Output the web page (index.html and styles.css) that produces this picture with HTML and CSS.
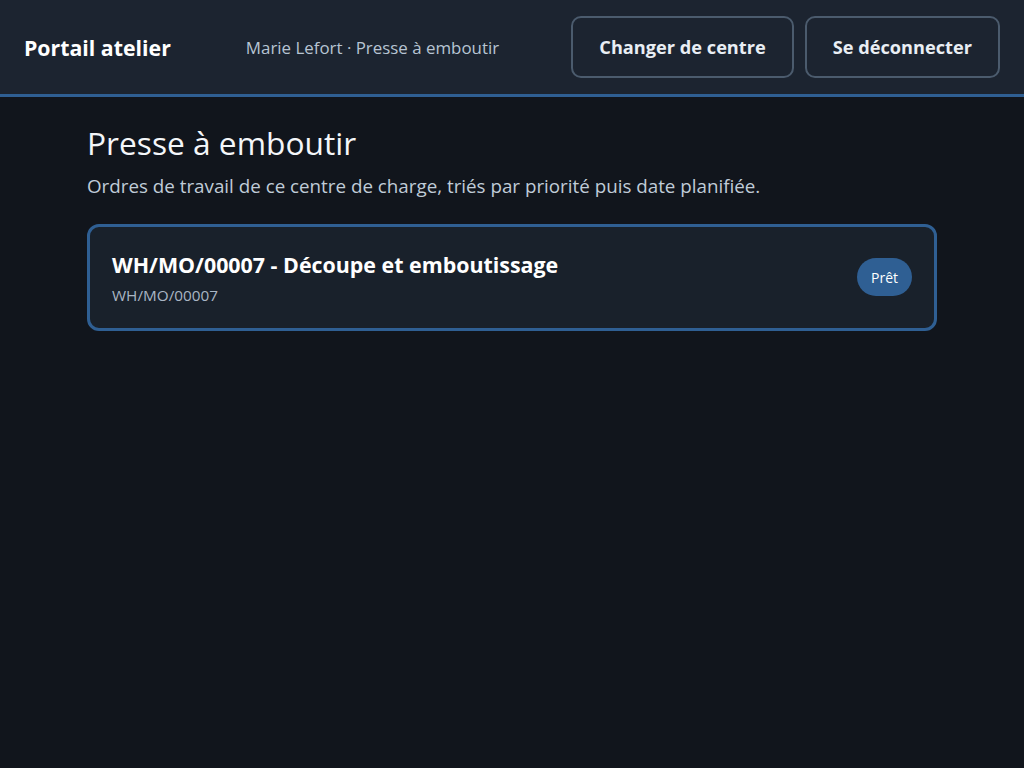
FILE: index.html
```html
<!DOCTYPE html>
<html lang="fr">
<head>
<meta charset="utf-8">
<title>Portail atelier</title>
<link rel="stylesheet" href="styles.css">
</head>
<body>
<header class="topbar">
  <div class="brand">Portail atelier</div>
  <div class="context">Marie Lefort · Presse à emboutir</div>
  <div class="actions">
    <button class="btn">Changer de centre</button>
    <button class="btn">Se déconnecter</button>
  </div>
</header>
<main class="content">
  <h1 class="title">Presse à emboutir</h1>
  <p class="lead">Ordres de travail de ce centre de charge, triés par priorité puis date planifiée.</p>
  <div class="card">
    <div class="card-text">
      <div class="card-title">WH/MO/00007 - Découpe et emboutissage</div>
      <div class="card-sub">WH/MO/00007</div>
    </div>
    <span class="badge">Prêt</span>
  </div>
</main>
</body>
</html>
```

FILE: styles.css
```css
* { box-sizing: border-box; }
html, body { margin: 0; padding: 0; }
body {
  background: #11151c;
  color: #f1f4f8;
  font-family: "Open Sans", "Noto Sans", sans-serif;
  min-height: 768px;
}
.topbar {
  display: flex;
  align-items: center;
  height: 97px;
  padding: 0 24px;
  background: #1c2430;
  border-bottom: 3px solid #2f5f93;
}
.brand {
  font-weight: 700;
  font-size: 21.3px;
  color: #ffffff;
}
.context {
  margin-left: 75px;
  font-size: 16.9px;
  color: #b7c4d3;
}
.actions {
  margin-left: auto;
  display: flex;
  gap: 11px;
  margin-top: -1px;
}
.btn {
  font-family: inherit;
  font-weight: 700;
  font-size: 18.2px;
  color: #e9eef4;
  background: transparent;
  border: 2px solid #4b5b6d;
  border-radius: 10px;
  height: 62px;
  padding: 0 26px;
  cursor: pointer;
}
.content {
  width: 850px;
  margin: 0 auto;
  padding-top: 24px;
}
.title {
  margin: 0;
  font-size: 31.7px;
  font-weight: 400;
  color: #f4f6f9;
  line-height: 44px;
}
.lead {
  margin: 8px 0 0;
  font-size: 18.8px;
  color: #c0ccd8;
  line-height: 26px;
}
.card {
  margin-top: 25px;
  display: flex;
  align-items: center;
  justify-content: space-between;
  height: 107px;
  padding: 0 22px;
  background: #19212b;
  border: 3px solid #2f5f93;
  border-radius: 12px;
}
.card-text {
  padding-top: 2px;
}
.card-title {
  font-weight: 700;
  font-size: 21.4px;
  color: #ffffff;
  line-height: 28px;
}
.card-sub {
  margin-top: 5px;
  font-size: 15.3px;
  color: #a9b6c4;
  line-height: 22px;
}
.badge {
  display: inline-flex;
  align-items: center;
  height: 38px;
  padding: 0 14px;
  margin-top: -1px;
  border-radius: 19px;
  background: #2f5f93;
  color: #ffffff;
  font-size: 14px;
  font-weight: 500;
}
```
